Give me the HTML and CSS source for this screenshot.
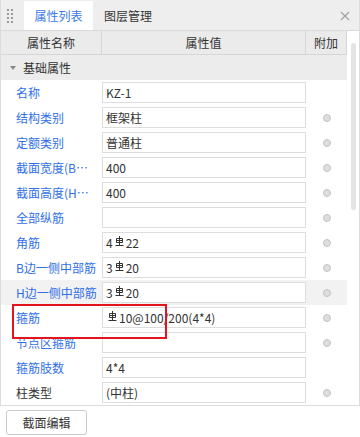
FILE: index.html
```html
<!DOCTYPE html>
<html lang="zh">
<head>
<meta charset="utf-8">
<link rel="stylesheet" href="styles.css">
</head>
<body>
<div class="panel">
  <div class="tabs">
    <div class="grip"><i></i><i></i><i></i><i></i><i></i><i></i><i></i><i></i></div>
    <div class="tab active">属性列表</div>
    <div class="tab">图层管理</div>
    <div class="spacer"></div>
    <svg class="close" width="10" height="10" viewBox="0 0 10 10"><path d="M1 1L9 9M9 1L1 9" stroke="#a0a0a0" stroke-width="1.1" fill="none"/></svg>
  </div>
  <div class="body">
    <div class="table">
      <div class="head">
        <div class="hc">属性名称</div>
        <div class="hc">属性值</div>
        <div class="hc">附加</div>
      </div>
      <div class="group"><span class="tri"></span>基础属性</div>
      <div class="row"><div class="lbl">名称</div><div class="val"><div class="box">KZ-1</div></div><div class="add"></div></div>
      <div class="row"><div class="lbl">结构类别</div><div class="val"><div class="box">框架柱</div></div><div class="add"><span class="dot"></span></div></div>
      <div class="row"><div class="lbl">定额类别</div><div class="val"><div class="box">普通柱</div></div><div class="add"><span class="dot"></span></div></div>
      <div class="row"><div class="lbl">截面宽度(B边)(mm)</div><div class="val"><div class="box">400</div></div><div class="add"><span class="dot"></span></div></div>
      <div class="row"><div class="lbl">截面高度(H边)(mm)</div><div class="val"><div class="box">400</div></div><div class="add"><span class="dot"></span></div></div>
      <div class="row"><div class="lbl">全部纵筋</div><div class="val"><div class="box"></div></div><div class="add"><span class="dot"></span></div></div>
      <div class="row"><div class="lbl">角筋</div><div class="val"><div class="box">4<svg class="rb" width="9" height="10" viewBox="0 0 9 10"><path d="M1.5 2.5H7.5V6.5H1.5ZM1.5 4.5H7.5M4.5 0V9M0.5 9.5H8.5" stroke="#333" stroke-width="1" fill="none"/></svg>22</div></div><div class="add"><span class="dot"></span></div></div>
      <div class="row"><div class="lbl">B边一侧中部筋</div><div class="val"><div class="box">3<svg class="rb" width="9" height="10" viewBox="0 0 9 10"><path d="M1.5 2.5H7.5V6.5H1.5ZM1.5 4.5H7.5M4.5 0V9M0.5 9.5H8.5" stroke="#333" stroke-width="1" fill="none"/></svg>20</div></div><div class="add"><span class="dot"></span></div></div>
      <div class="row hover"><div class="lbl">H边一侧中部筋</div><div class="val"><div class="box">3<svg class="rb" width="9" height="10" viewBox="0 0 9 10"><path d="M1.5 2.5H7.5V6.5H1.5ZM1.5 4.5H7.5M4.5 0V9M0.5 9.5H8.5" stroke="#333" stroke-width="1" fill="none"/></svg>20</div></div><div class="add"><span class="dot"></span></div></div>
      <div class="row"><div class="lbl">箍筋</div><div class="val"><div class="box"><svg class="rb" width="9" height="10" viewBox="0 0 9 10"><path d="M1.5 2.5H7.5V6.5H1.5ZM1.5 4.5H7.5M4.5 0V9M0.5 9.5H8.5" stroke="#333" stroke-width="1" fill="none"/></svg>10@100/200(4*4)</div></div><div class="add"><span class="dot"></span></div></div>
      <div class="row"><div class="lbl">节点区箍筋</div><div class="val"><div class="box"></div></div><div class="add"><span class="dot"></span></div></div>
      <div class="row"><div class="lbl">箍筋肢数</div><div class="val"><div class="box">4*4</div></div><div class="add"></div></div>
      <div class="row"><div class="lbl dark">柱类型</div><div class="val"><div class="box">(中柱)</div></div><div class="add"><span class="dot"></span></div></div>
    </div>
    <div class="scroll"><div class="thumb"></div></div>
  </div>
  <div class="mark"></div>
</div>
<div class="footer"><button class="btn">截面编辑</button></div>
</body>
</html>
```

FILE: styles.css
```css
* { box-sizing: border-box; }
html, body { margin: 0; padding: 0; background: #fff; }
body {
  width: 360px;
  height: 437px;
  overflow: hidden;
  font-family: "Noto Sans CJK SC", "Noto Sans", sans-serif;
  font-size: 12px;
  color: #333;
}
.panel {
  position: relative;
  width: 360px;
  border-left: 1px solid #dcdcdc;
  border-right: 1px solid #dcdcdc;
  border-bottom: 1px solid #dcdcdc;
}
.tabs {
  height: 31px;
  background: #eeeeee;
  border-bottom: 1px solid #d9d9d9;
  display: flex;
  align-items: stretch;
  padding-top: 1px;
}
.grip {
  width: 23px;
  display: grid;
  grid-template-columns: 2px 2px;
  grid-auto-rows: 2px;
  column-gap: 2px;
  row-gap: 2px;
  align-content: center;
  padding-left: 6px;
}
.grip i { display: block; width: 2px; height: 2px; background: #9a9a9a; }
.tab {
  width: 69px;
  display: flex;
  align-items: center;
  justify-content: center;
  font-size: 12px;
  color: #333;
}
.tab.active { background: #fff; color: #3a7be8; }
.tab + .tab { width: 70px; }
.spacer { flex: 1; }
.close { align-self: center; margin-right: 9px; margin-top: 0; }

.body { display: flex; }
.table { width: 346px; }
.head {
  display: grid;
  grid-template-columns: 101px 204px 41px;
  height: 24px;
  background: #ebebeb;
  border-bottom: 1px solid #d6d6d6;
}
.hc {
  border-right: 1px solid #d6d6d6;
  display: flex;
  align-items: center;
  justify-content: center;
  color: #333;
}
.group {
  height: 25px;
  background: #ececec;
  display: flex;
  align-items: center;
  padding-left: 9px;
  color: #333;
}
.tri {
  width: 0; height: 0;
  border-left: 3px solid transparent;
  border-right: 3px solid transparent;
  border-top: 4px solid #888;
  margin-right: 7px;
}
.row {
  display: grid;
  grid-template-columns: 101px 204px 41px;
  height: 25px;
  align-items: center;
}
.row.hover { background: #f2f2f2; }
.lbl {
  padding-left: 15px;
  padding-right: 3px;
  color: #2f6fea;
  white-space: nowrap;
  overflow: hidden;
  text-overflow: ellipsis;
}
.lbl.dark { color: #333; }
.box {
  height: 21px;
  border: 1px solid #dddddd;
  background: #fff;
  padding-left: 3px;
  display: flex;
  align-items: center;
  color: #333;
  white-space: nowrap;
  overflow: hidden;
}
.rb { margin: -4px 2px 0 2px; }
.add { display: flex; justify-content: center; align-items: center; }
.dot {
  width: 8px; height: 8px;
  border-radius: 50%;
  background: #dedede;
  border: 1px solid #c4c4c4;
}
.scroll { width: 12px; padding-left: 4px; padding-top: 12px; }
.thumb { width: 5px; height: 167px; border-radius: 3px; background: #e4e4e4; }
.mark {
  position: absolute;
  left: 11px;
  top: 304px;
  width: 155px;
  height: 35px;
  border: 2px solid #e3141e;
}
.footer { padding: 4px 0 0 6px; }
.btn {
  width: 81px;
  height: 25px;
  border: 1px solid #c9c9c9;
  border-radius: 3px;
  background: #fff;
  font-family: "Noto Sans CJK SC", sans-serif;
  font-size: 12px;
  color: #333;
  padding: 0;
}
```
